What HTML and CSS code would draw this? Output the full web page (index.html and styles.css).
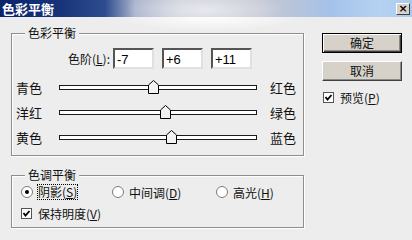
FILE: index.html
```html
<!DOCTYPE html>
<html>
<head>
    <title>色彩平衡</title>
    <meta charset="UTF-8">
    <link rel="stylesheet" href="styles.css">
</head>
<body>
<div class="window">
    <!-- 标题栏 -->
    <div class="titlebar">
        <span class="title">色彩平衡</span>
        <span class="close">×</span>
    </div>

    <div class="content">
        <div class="left">
            <!-- 色彩平衡 -->
            <div class="group balance">
                <span class="legend">色彩平衡</span>
                <div class="levels">
                    <span class="levels-label">色阶(<u>L</u>):</span>
                    <span class="field">-7</span>
                    <span class="field">+6</span>
                    <span class="field">+11</span>
                </div>
                <div class="slider-row">
                    <span class="side-left">青色</span>
                    <span class="track"><span class="thumb" style="left: 88px"><svg width="11" height="14" viewBox="0 0 11 14"><polygon points="0.5,5 5.5,0.5 10.5,5 10.5,13.5 0.5,13.5" fill="#f2f2f2" stroke="#000"/></svg></span></span>
                    <span class="side-right">红色</span>
                </div>
                <div class="slider-row">
                    <span class="side-left">洋红</span>
                    <span class="track"><span class="thumb" style="left: 100px"><svg width="11" height="14" viewBox="0 0 11 14"><polygon points="0.5,5 5.5,0.5 10.5,5 10.5,13.5 0.5,13.5" fill="#f2f2f2" stroke="#000"/></svg></span></span>
                    <span class="side-right">绿色</span>
                </div>
                <div class="slider-row">
                    <span class="side-left">黄色</span>
                    <span class="track"><span class="thumb" style="left: 106px"><svg width="11" height="14" viewBox="0 0 11 14"><polygon points="0.5,5 5.5,0.5 10.5,5 10.5,13.5 0.5,13.5" fill="#f2f2f2" stroke="#000"/></svg></span></span>
                    <span class="side-right">蓝色</span>
                </div>
            </div>

            <!-- 色调平衡 -->
            <div class="group tone">
                <span class="legend">色调平衡</span>
                <div class="radio-row">
                    <span class="option opt-shadow">
                        <svg class="radio" width="12" height="12" viewBox="0 0 12 12"><circle cx="6" cy="6" r="5.5" fill="#fff" stroke="#7a7a7a"/><circle cx="6" cy="6" r="2" fill="#000"/></svg>
                        <span class="focus">阴影(<u>S</u>)</span>
                    </span>
                    <span class="option opt-mid">
                        <svg class="radio" width="12" height="12" viewBox="0 0 12 12"><circle cx="6" cy="6" r="5.5" fill="#fff" stroke="#7a7a7a"/></svg>
                        <span>中间调(<u>D</u>)</span>
                    </span>
                    <span class="option">
                        <svg class="radio" width="12" height="12" viewBox="0 0 12 12"><circle cx="6" cy="6" r="5.5" fill="#fff" stroke="#7a7a7a"/></svg>
                        <span>高光(<u>H</u>)</span>
                    </span>
                </div>
                <div class="check-row">
                    <svg class="checkbox" width="11" height="11" viewBox="0 0 11 11"><rect x="0.5" y="0.5" width="10" height="10" fill="#fff" stroke="#555"/><polyline points="2.5,5 4.5,7.5 8.5,3" fill="none" stroke="#000" stroke-width="1.8"/></svg>
                    <span>保持明度(<u>V</u>)</span>
                </div>
            </div>
        </div>

        <!-- 按钮 -->
        <div class="right">
            <div class="btn btn-default">确定</div>
            <div class="btn">取消</div>
            <div class="check-row preview">
                <svg class="checkbox" width="11" height="11" viewBox="0 0 11 11"><rect x="0.5" y="0.5" width="10" height="10" fill="#fff" stroke="#555"/><polyline points="2.5,5 4.5,7.5 8.5,3" fill="none" stroke="#000" stroke-width="1.8"/></svg>
                <span>预览(<u>P</u>)</span>
            </div>
        </div>
    </div>
</div>
</body>
</html>
```

FILE: styles.css
```css
body {
    margin: 0;
    background-color: #ededed;
    font-family: "Noto Sans CJK SC", "Liberation Sans", sans-serif;
    font-size: 12px;
    color: #111;
}

.window {
    width: 412px;
    height: 240px;
    overflow: hidden;
    /* 标题栏下方的白色光晕 */
    background: radial-gradient(ellipse 95px 14px at 210px 17px, rgba(255, 255, 255, 0.95), rgba(255, 255, 255, 0)) #ededed;
}

/* 标题栏 */
.titlebar {
    height: 17px;
    display: flex;
    align-items: center;
    justify-content: space-between;
    padding: 0 2px;
    background:
        radial-gradient(ellipse 80px 20px at 205px 10px, rgba(235, 236, 240, 0.9), rgba(235, 236, 240, 0)),
        linear-gradient(to right, #0a246a 0px, #17347a 60px, #2e4c8e 105px, #aab4cc 135px, #c8ccd8 180px, #c4c8d4 260px, #b4c4dc 300px, #a4c2ea 330px, #b6d2f2 380px, #a8caf0 412px);
}

.title {
    color: #fff;
    font-weight: bold;
    font-size: 13px;
    line-height: 17px;
}

.close {
    width: 12px;
    height: 10px;
    background-color: #d6d2ca;
    border: 1px solid;
    border-color: #fff #404040 #404040 #fff;
    font: bold 11px/10px "DejaVu Sans", sans-serif;
    text-align: center;
    color: #000;
}

.content {
    display: flex;
}

.left {
    padding-left: 11px;
    width: 293px;
}

/* 分组框 */
.group {
    position: relative;
    box-sizing: border-box;
    border: 1px solid #8e8e8e;
    box-shadow: 1px 1px 0 #fff, inset 1px 1px 0 #fff;
}

.legend {
    position: absolute;
    top: -8px;
    left: 13px;
    padding: 0 3px;
    line-height: 14px;
    background-color: #ededed;
}

.balance {
    margin-top: 16px;
    height: 123px;
}

.tone {
    margin-top: 19px;
    height: 53px;
}

/* 色阶 */
.levels {
    display: flex;
    align-items: center;
    margin-top: 14px;
    height: 21px;
}

.levels-label {
    width: 98px;
    text-align: right;
    margin-right: 3px;
}

.field {
    box-sizing: border-box;
    width: 41px;
    height: 21px;
    margin-right: 8px;
    padding: 2px 0 0 2px;
    background-color: #fff;
    border: 2px solid;
    border-color: #555 #e0e0e0 #e0e0e0 #555;
    font-family: "Liberation Sans", sans-serif;
    font-size: 13px;
    line-height: 15px;
    color: #000;
}

/* 滑块 */
.slider-row {
    display: flex;
    align-items: center;
    height: 25px;
    padding-left: 4px;
}

.levels + .slider-row {
    margin-top: 6px;
}

.side-left {
    width: 43px;
    font-size: 13px;
}

.side-right {
    margin-left: 13px;
    font-size: 13px;
}

.track {
    position: relative;
    box-sizing: border-box;
    width: 198px;
    height: 5px;
    background-color: #fff;
    border: 1px solid #1a1a1a;
}

.thumb {
    position: absolute;
    top: -6px;
    width: 11px;
    height: 14px;
}

.thumb svg {
    display: block;
}

/* 单选 */
.radio-row {
    display: flex;
    align-items: center;
    margin-top: 8px;
    height: 16px;
    padding-left: 9px;
}

.option {
    display: flex;
    align-items: center;
}

.opt-shadow {
    width: 91px;
}

.opt-mid {
    width: 104px;
}

.radio {
    margin-right: 5px;
}

.focus {
    outline: 1px dotted #000;
    line-height: 14px;
}

.check-row {
    display: flex;
    align-items: center;
    gap: 6px;
    margin-top: 5px;
    height: 16px;
    padding-left: 9px;
}

/* 按钮 */
.right {
    padding-left: 18px;
    padding-top: 16px;
}

.btn {
    box-sizing: border-box;
    width: 80px;
    height: 20px;
    margin-bottom: 8px;
    background-color: #d6d2ca;
    border: 1px solid;
    border-color: #fff #404040 #404040 #fff;
    box-shadow: inset -1px -1px 0 #8a8a8a;
    text-align: center;
    line-height: 17px;
}

.btn-default {
    border: 1px solid #000;
    box-shadow: inset 1px 1px 0 #fff, inset -1px -1px 0 #404040, inset -2px -2px 0 #8a8a8a;
}

.preview {
    margin-top: 7px;
    padding-left: 1px;
}
```
